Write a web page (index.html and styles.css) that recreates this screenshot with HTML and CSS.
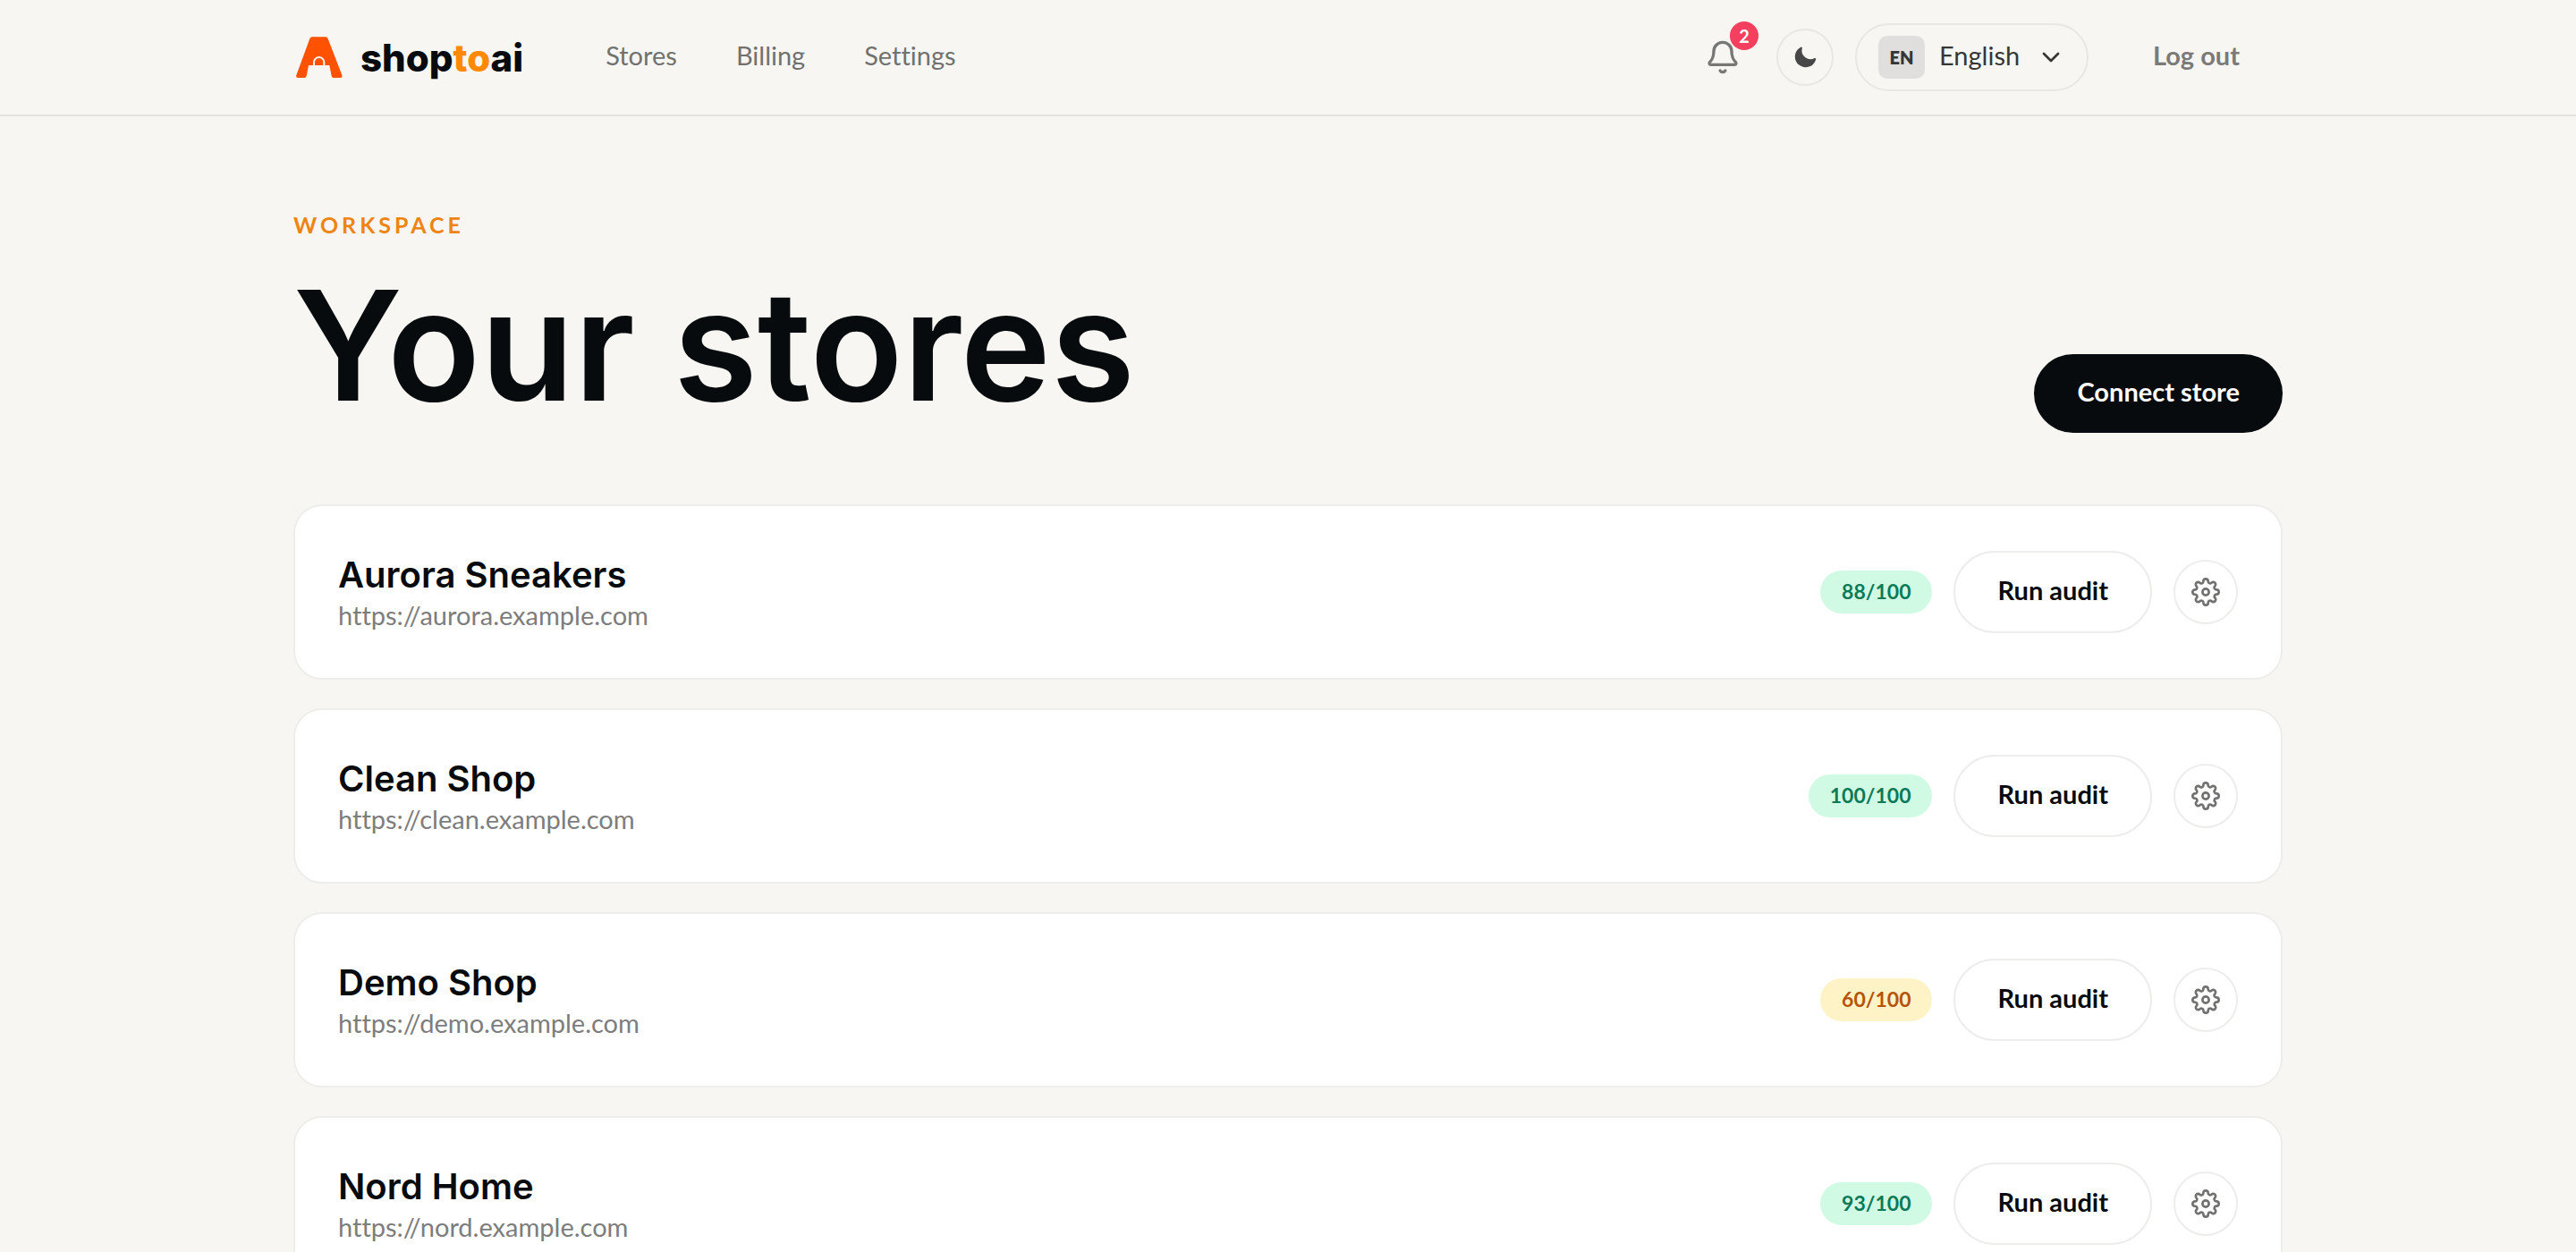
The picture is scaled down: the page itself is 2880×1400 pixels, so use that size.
FILE: index.html
```
<!DOCTYPE html>
<html lang="en">
<head>
  <meta charset="utf-8">
  <meta name="viewport" content="width=device-width, initial-scale=1">
  <title>Your stores – shoptoai</title>
  <link rel="stylesheet" href="styles.css">
</head>
<body>
  <svg class="sprite" aria-hidden="true">
    <symbol id="gear" viewBox="0 0 24 24">
      <circle cx="12" cy="12" r="2.7"/>
      <path d="M19.4 15a1.65 1.65 0 0 0 .33 1.82l.06.06a2 2 0 0 1 0 2.83 2 2 0 0 1-2.83 0l-.06-.06a1.65 1.65 0 0 0-1.82-.33 1.65 1.65 0 0 0-1 1.51V21a2 2 0 0 1-2 2 2 2 0 0 1-2-2v-.09A1.65 1.65 0 0 0 9 19.4a1.65 1.65 0 0 0-1.82.33l-.06.06a2 2 0 0 1-2.83 0 2 2 0 0 1 0-2.83l.06-.06a1.65 1.65 0 0 0 .33-1.82 1.65 1.65 0 0 0-1.51-1H3a2 2 0 0 1-2-2 2 2 0 0 1 2-2h.09A1.65 1.65 0 0 0 4.6 9a1.65 1.65 0 0 0-.33-1.82l-.06-.06a2 2 0 0 1 0-2.83 2 2 0 0 1 2.83 0l.06.06a1.65 1.65 0 0 0 1.82.33H9a1.65 1.65 0 0 0 1-1.51V3a2 2 0 0 1 2-2 2 2 0 0 1 2 2v.09a1.65 1.65 0 0 0 1 1.51 1.65 1.65 0 0 0 1.82-.33l.06-.06a2 2 0 0 1 2.83 0 2 2 0 0 1 0 2.83l-.06.06a1.65 1.65 0 0 0-.33 1.82V9a1.65 1.65 0 0 0 1.51 1H21a2 2 0 0 1 2 2 2 2 0 0 1-2 2h-.09a1.65 1.65 0 0 0-1.51 1z"/>
    </symbol>
  </svg>

  <header class="topbar">
    <div class="wrap topbar-row">
      <a class="brand" href="#">
        <svg class="brand-mark" viewBox="0 0 156 138" aria-hidden="true">
          <path fill="#ff5200" d="M54 1h45q6 0 8 6l47 122q3 9-6 9h-22q-6 0-7-6l-7-36H42l-7 36q-1 6-7 6H7q-9 0-6-9L46 7q2-6 8-6z"/>
          <path fill="none" stroke="#f7f6f2" stroke-width="6" d="M60 98V86a17 17 0 0 1 34 0v12"/>
        </svg>
        <span class="brand-name">shop<span class="brand-accent">to</span>ai</span>
      </a>
      <nav class="nav" aria-label="Main">
        <a href="#">Stores</a>
        <a href="#">Billing</a>
        <a href="#">Settings</a>
      </nav>
      <div class="tools">
        <button class="bell" type="button" aria-label="Notifications">
          <svg class="bell-icon" viewBox="0 0 24 24" aria-hidden="true">
            <path d="M10.268 21a2 2 0 0 0 3.464 0"/>
            <path d="M3.262 15.326A1 1 0 0 0 4 17h16a1 1 0 0 0 .74-1.673C19.41 13.956 18 12.499 18 8A6 6 0 0 0 6 8c0 4.499-1.411 5.956-2.738 7.326"/>
          </svg>
          <span class="badge">2</span>
        </button>
        <button class="round theme" type="button" aria-label="Dark theme">
          <svg class="moon" viewBox="0 0 20 20" aria-hidden="true">
            <path d="M7.455 2.004a.75.75 0 0 1 .26.77 7 7 0 0 0 9.958 7.967.75.75 0 0 1 1.067.853A8.5 8.5 0 1 1 6.647 1.921a.75.75 0 0 1 .808.083Z"/>
          </svg>
        </button>
        <label class="lang">
          <span class="lang-code">EN</span>
          <select class="lang-select" aria-label="Language">
            <option>English</option>
          </select>
          <svg class="chevron" viewBox="0 0 24 24" aria-hidden="true"><path d="m6 9 6 6 6-6"/></svg>
        </label>
        <button class="logout" type="button">Log out</button>
      </div>
    </div>
  </header>

  <main class="wrap main">
    <div class="heading">
      <div class="heading-text">
        <p class="eyebrow">WORKSPACE</p>
        <h1 class="title">Your stores</h1>
      </div>
      <button class="connect" type="button">Connect store</button>
    </div>

    <ul class="stores">
      <li class="card">
        <div class="info">
          <h2 class="name">Aurora Sneakers</h2>
          <p class="url">https://aurora.example.com</p>
        </div>
        <span class="score good">88/100</span>
        <button class="audit" type="button">Run audit</button>
        <button class="round" type="button" aria-label="Aurora Sneakers settings"><svg class="gear" aria-hidden="true"><use href="#gear"/></svg></button>
      </li>
      <li class="card">
        <div class="info">
          <h2 class="name">Clean Shop</h2>
          <p class="url">https://clean.example.com</p>
        </div>
        <span class="score good">100/100</span>
        <button class="audit" type="button">Run audit</button>
        <button class="round" type="button" aria-label="Clean Shop settings"><svg class="gear" aria-hidden="true"><use href="#gear"/></svg></button>
      </li>
      <li class="card">
        <div class="info">
          <h2 class="name">Demo Shop</h2>
          <p class="url">https://demo.example.com</p>
        </div>
        <span class="score fair">60/100</span>
        <button class="audit" type="button">Run audit</button>
        <button class="round" type="button" aria-label="Demo Shop settings"><svg class="gear" aria-hidden="true"><use href="#gear"/></svg></button>
      </li>
      <li class="card">
        <div class="info">
          <h2 class="name">Nord Home</h2>
          <p class="url">https://nord.example.com</p>
        </div>
        <span class="score good">93/100</span>
        <button class="audit" type="button">Run audit</button>
        <button class="round" type="button" aria-label="Nord Home settings"><svg class="gear" aria-hidden="true"><use href="#gear"/></svg></button>
      </li>
    </ul>
  </main>
</body>
</html>
```

FILE: styles.css
```
:root {
  --bg: #f7f6f2;
  --ink: #080b0e;
  --muted: #71716f;
  --line: #e8e7e4;
  --display: Inter, sans-serif;
  --text: Lato, sans-serif;
}

* {
  box-sizing: border-box;
}

body {
  margin: 0;
  background: var(--bg);
  color: var(--ink);
  font: 400 29px/40px var(--text);
  font-variant-ligatures: none;
}

h1, h2, p, ul {
  margin: 0;
  padding: 0;
}

a {
  color: inherit;
  text-decoration: none;
}

button, select {
  margin: 0;
  padding: 0;
  border: 0;
  background: none;
  color: inherit;
  font: inherit;
  font-variant-ligatures: none;
  cursor: pointer;
}

svg {
  display: block;
  flex: none;
}

.sprite {
  position: absolute;
  width: 0;
  height: 0;
}

.wrap {
  width: calc(100% - 96px);
  max-width: 2224px;
  margin: 0 auto;
}

/* Top bar */
.topbar {
  border-bottom: 2px solid #e3e2df;
}

.topbar-row {
  display: flex;
  align-items: center;
  min-height: 128px;
}

.brand {
  display: flex;
  align-items: center;
  gap: 20px;
  padding-left: 3px;
}

.brand-mark {
  width: 52px;
  height: 46px;
}

.brand-name {
  padding-top: 2px;
  font: 800 42px/48px var(--display);
}

.brand-accent {
  color: #ff8a00;
}

.nav {
  display: flex;
  gap: 66px;
  margin-left: 92px;
  padding-bottom: 4px;
  color: var(--muted);
}

.tools {
  display: flex;
  align-items: center;
  gap: 24px;
  margin-left: auto;
}

.bell {
  position: relative;
  display: grid;
  place-items: center;
  width: 72px;
  height: 72px;
  color: #777775;
}

.bell-icon {
  width: 40px;
  height: 40px;
}

.bell-icon, .gear, .chevron {
  fill: none;
  stroke: currentColor;
  stroke-width: 2;
  stroke-linecap: round;
  stroke-linejoin: round;
}

.badge {
  position: absolute;
  top: -4px;
  right: -4px;
  width: 32px;
  height: 32px;
  border-radius: 16px;
  background: #f43f5e;
  color: #fff;
  font-size: 20px;
  font-weight: 700;
  line-height: 32px;
  text-align: center;
}

.round {
  display: grid;
  place-items: center;
  width: 72px;
  height: 72px;
  border: 2px solid #ededec;
  border-radius: 50%;
  color: var(--muted);
}

.round.theme {
  width: 64px;
  height: 64px;
  border-color: var(--line);
  color: #474747;
}

.moon {
  width: 28px;
  height: 28px;
  fill: currentColor;
}

.gear {
  width: 32px;
  height: 32px;
}

.lang {
  display: flex;
  align-items: center;
  height: 76px;
  padding: 0 24px;
  border: 2px solid var(--line);
  border-radius: 38px;
  color: #363636;
}

.lang-code {
  width: 52px;
  border-radius: 10px;
  background: #e0dfdd;
  font-size: 20px;
  font-weight: 800;
  line-height: 48px;
  text-align: center;
}

.lang-select {
  appearance: none;
  height: 72px;
  margin-right: -32px;
  padding: 0 50px 4px 16px;
}

.chevron {
  width: 32px;
  height: 32px;
  pointer-events: none;
}

.logout {
  padding: 0 48px 4px;
  color: #7a7a78;
  font-weight: 700;
}

/* Page heading */
.main {
  padding: 96px 0;
}

.heading {
  display: flex;
  align-items: flex-end;
  justify-content: space-between;
  margin-bottom: 80px;
}

.heading-text {
  padding-bottom: 8px;
}

.eyebrow {
  color: #ee8512;
  font-size: 25px;
  font-weight: 700;
  line-height: 50px;
  letter-spacing: 4px;
}

.title {
  margin-top: 20px;
  font: 600 171px/180px var(--display);
}

.connect {
  height: 88px;
  padding: 0 48px 4px;
  border-radius: 44px;
  background: var(--ink);
  color: #fff;
  font-weight: 700;
}

/* Store list */
.stores {
  display: grid;
  gap: 32px;
  list-style: none;
}

.card {
  display: flex;
  align-items: center;
  gap: 24px;
  padding: 50px 48px;
  border: 2px solid #ededeb;
  border-radius: 32px;
  background: #fff;
}

.info {
  flex: 1;
  min-width: 0;
  padding-top: 2px;
}

.name {
  font: 600 40px/50px var(--display);
}

.url {
  color: #7d7d7d;
}

.score {
  height: 48px;
  padding: 0 24px;
  border-radius: 24px;
  font-size: 23px;
  font-weight: 700;
  line-height: 46px;
}

.good {
  background: #d1fae5;
  color: #0a7a58;
}

.fair {
  background: #fef3c7;
  color: #b45309;
}

.audit {
  height: 92px;
  padding: 0 47px 4px;
  border: 2px solid #ededec;
  border-radius: 46px;
  font-weight: 700;
}
```
